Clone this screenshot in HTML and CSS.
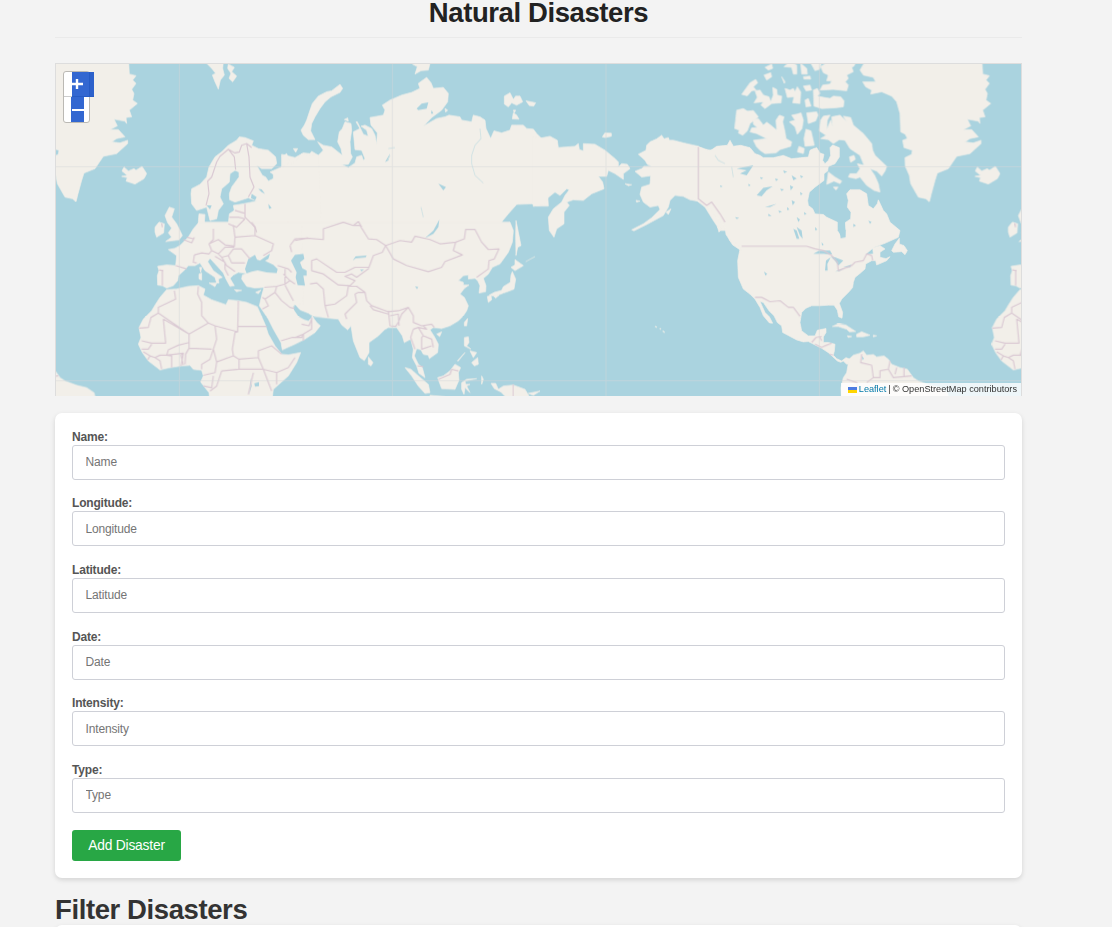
FILE: index.html
```html
<!DOCTYPE html>
<html lang="en">
<head>
<meta charset="utf-8">
<title>Natural Disasters</title>
<link rel="stylesheet" href="styles.css">
</head>
<body>
<main class="container">
<h1 class="page-title">Natural Disasters</h1>
<section class="map">
<svg class="map-tiles" viewBox="3 12 2895 993" preserveAspectRatio="none" aria-hidden="true">
<defs>
<filter id="soft" x="0" y="0" width="100%" height="100%"><feGaussianBlur stdDeviation="1.7"/></filter>
<g id="world">
<!-- Greenland, Iceland and the Canadian Arctic -->
<g class="land" transform="translate(1935 0)">
<path d="M495 5L480 30 490 45 520 52 527 65 488 65 497 80 515 90 512 102 545 95 575 108 590 125 600 160 602 215 616 222 622 235 608 240 612 262 637 270 635 282 615 292 616 318 628 345 632 370 655 410 678 415 688 424 694 400 705 360 712 338 745 325 770 288 810 280 843 250 843 240 820 248 795 245 810 235 835 230 815 208 790 208 812 197 802 177 835 183 840 190 838 172 855 170 848 150 872 130 858 120 862 100 855 88 868 70 858 60 868 47 848 42 846 5Z"/>
<path d="M825 348L842 345 826 332 832 320 845 332 862 325 868 330 886 318 900 340 892 355 865 371 838 362 842 352Z"/>
<path d="M110 150L130 145 142 153 160 151 175 170 150 190 142 212 128 225 115 218 118 210 104 205Z"/>
<path d="M160 180L175 175 190 195 200 186 212 195 230 210 228 180 238 165 252 170 248 185 255 215 258 235 275 245 272 258 240 268 228 278 195 280 180 270 170 260 160 240 200 235 170 220 150 215 155 203 172 202 160 192Z"/>
<path d="M275 165L290 162 303 158 310 180 306 205 292 222 285 200 268 185 285 180Z"/>
<path d="M320 158L350 155 354 165 347 182 325 190ZM318 207L333 212 343 255 315 258 312 235Z"/>
<path d="M362 180L370 168 390 165 382 180 380 210 392 180 398 200 395 170 420 165 440 185 430 168 452 172 460 195 490 220 515 250 518 270 525 285 560 318 555 332 545 347 530 332 510 325 524 345 535 370 540 395 522 390 500 375 480 350 468 355 445 350 450 340 470 340 480 325 472 310 492 315 480 285 450 265 435 240 418 238 400 250 385 238 362 235 378 225 358 212Z"/>
<path d="M385 335L405 350 425 362 420 370 402 362 380 372ZM400 380L414 380 408 389ZM448 290L462 285 466 297 452 306Z"/>
<path d="M340 90L352 85 360 100 352 108 372 112 390 115 400 108 422 110 432 122 430 140 405 143 365 145 342 138Z"/>
<path d="M385 5L468 5 462 18 455 22 460 35 440 45 445 55 436 65 445 75 440 92 400 88 360 90 368 75 390 72 395 62 380 62 385 45 370 38 362 20Z"/>
<path d="M125 103L150 68 167 58 173 68 160 80 168 90 155 92 142 107ZM165 92L180 90 190 105 207 110 212 125 220 105 218 82 230 88 232 105 245 108 243 128 215 130 195 145 183 135 190 125 162 128 172 112Z"/>
<path d="M195 22L215 12 218 25 205 30ZM192 45L212 38 215 50 200 60ZM252 20L270 5 290 15 290 42 280 42 275 22ZM302 10L320 25 322 42 305 42ZM330 5L365 5 358 28 345 32ZM255 85L270 90 280 85 285 95 292 80 302 95 300 130 278 128 282 110 262 112ZM245 50L255 65 253 70ZM310 78L330 75 335 90 318 92ZM315 120L325 115 333 138 318 140ZM310 50L330 48 332 57 312 57ZM297 258L313 265 310 280 292 275Z"/>
</g>
<!-- North America -->
<g class="land" transform="translate(1455 0)">
<path d="M520 270L490 268 475 258 430 248 400 240 388 240 385 232 372 236 365 225 350 236 330 245 320 255 318 270 295 282 315 300 322 312 336 318 312 318 305 325 285 333 305 350 332 346 330 372 305 380 300 402 310 425 330 440 355 435 360 447 335 472 310 490 275 508 282 511 320 492 370 465 385 440 390 420 405 405 430 408 450 418 472 422 495 440 520 480 540 510 620 510 620 290Z"/>
<path d="M378 455L393 445 385 462ZM288 420L300 422 290 425ZM255 370L275 373 265 376ZM187 230L195 218 214 219 214 228 195 232Z"/>
</g>
<g class="land" transform="translate(1935 0)">
<path d="M-20 258L5 262 30 272 50 258 82 255 90 240 100 258 122 255 150 262 165 280 180 285 190 292 220 292 250 285 275 295 302 292 325 290 330 270 340 265 350 262 360 278 372 282 368 300 375 310 385 300 392 285 390 262 398 254 418 262 418 290 405 310 385 318 383 332 372 340 372 360 345 380 328 395 323 420 325 435 338 445 345 460 370 462 380 470 412 485 412 510 425 530 437 525 438 510 430 490 452 475 453 455 442 440 445 420 440 400 450 388 480 388 500 400 505 435 520 445 532 430 535 418 550 450 560 460 570 485 600 510 595 530 555 548 522 560 508 572 495 582 520 580 518 562 540 555 555 565 540 575 540 590 558 594 570 588 560 600 530 613 527 600 515 600 497 610 495 625 480 638 465 650 460 665 458 680 448 692 425 715 418 728 428 755 426 772 416 768 412 748 402 733 385 733 360 735 335 735 318 742 305 755 300 785 305 810 325 825 345 825 352 808 378 803 378 815 370 828 370 845 385 845 405 850 403 870 400 883 410 893 425 900 438 890 450 895 447 908 440 910 430 900 422 904 412 900 385 875 365 862 345 852 325 842 310 843 290 837 248 815 245 795 232 785 222 765 207 750 190 725 180 722 195 755 208 768 218 787 208 786 190 765 180 740 165 715 150 700 130 685 115 650 113 600 118 575 120 565 90 540 78 522 75 500 50 470 20 435 -20 415Z"/>
<path d="M575 570L585 550 598 533 598 550 612 555 622 570 615 582 605 573 580 575ZM87 536L105 545 120 560 124 570 98 553ZM52 498L63 505 57 515Z"/>
</g>
<g class="land" transform="translate(1935 495)">
<path d="M397 302L415 294 438 298 467 317 448 318 440 310 415 302ZM470 325L485 318 510 328 490 333 470 333ZM442 330L455 332 445 335ZM520 328L530 330 520 333Z"/>
<path d="M425 530L423 485 430 455 440 440 447 400 460 388 480 382 490 375 500 388 520 386 530 393 552 390 565 400 575 415 600 425 622 430 640 455 655 465 690 478 720 485 742 500 750 530Z"/>
</g>
<!-- Hawaii -->
<path class="land-line" d="M1800 797L1806 799M1814 803L1818 805M1823 810L1829 815"/>
<!-- Arctic islands off Eurasia -->
<g class="land">
<path d="M450 5L470 25 482 40 472 45 480 65 490 87 496 60 508 45 503 25 505 5ZM520 12L538 22 530 35 545 48 533 65 522 55 528 40 518 25ZM715 265L728 265 722 276Z"/>
</g>
<g class="land" transform="translate(720 0)">
<path d="M135 73L143 85 135 97 108 110 90 125 75 145 60 170 50 190 47 212 60 238 40 238 25 225 18 210 28 195 35 180 45 150 52 130 70 108 95 95 110 92Z"/>
<path d="M370 5L405 10 400 30 378 32 360 42 367 20 352 12ZM628 108L645 98 655 118 662 108 675 108 683 125 665 135 650 128 640 140 628 132ZM693 122L722 128 716 138 703 136ZM655 158L665 165 672 177 652 176ZM450 145L458 150 452 156ZM148 178L158 173 160 183ZM655 150L662 150 658 158Z"/>
<path d="M-40 282L0 292 25 278 45 280 50 273 70 285 85 270 68 245 85 255 110 260 142 285 138 265 128 245 133 215 142 205 150 185 168 190 170 210 165 245 167 280 172 290 160 312 140 313 160 322 180 308 185 290 200 285 205 300 210 295 200 270 180 268 175 215 195 205 183 185 187 185 205 222 220 228 215 210 198 198 210 195 230 205 240 225 245 252 247 218 228 195 225 172 265 165 270 150 262 135 285 120 320 105 350 97 375 85 370 70 395 52 408 68 415 85 445 82 460 100 458 125 440 150 410 172 385 198 425 175 450 170 462 165 495 170 500 180 530 185 535 165 555 170 570 180 573 205 587 235 597 212 620 218 645 210 650 195 665 195 685 195 695 205 715 207 725 220 740 235 750 235 760 437 725 437 710 430 665 432 640 460 615 490 640 498 650 507 640 530 -40 530Z"/>
</g>
<g class="land" transform="translate(1455 0)">
<path d="M-20 230L5 233 30 228 52 240 55 262 105 258 115 250 118 268 130 272 130 250 165 252 195 270 225 295 235 305 235 320 245 310 262 312 270 325 250 340 250 357 225 340 205 330 200 348 175 348 188 365 192 385 155 400 130 420 100 418 80 425 88 435 72 455 72 490 50 505 42 530 28 510 25 470 40 445 65 425 75 405 88 388 80 385 60 405 45 395 20 415 15 432 -20 438Z"/>
</g>
<g class="land">
<path d="M408 400L410 385 435 372 455 350 462 320 480 290 500 275 520 255 545 240 553 230 570 232 595 242 590 255 610 265 640 270 662 290 665 310 650 325 620 325 605 315 622 345 632 350 640 362 655 355 655 342 645 335 675 322 688 318 692 300 680 290 695 280 702 300 695 315 720 305 740 280 790 285 800 520 430 520 430 485 432 460 450 462 448 488 490 495 520 490 523 460 538 450 535 435 565 430 605 422 580 412 540 425 524 418 523 400 530 380 552 350 552 335 540 330 525 340 523 365 500 385 495 410 505 430 490 450 485 475 465 480 455 440 425 450 410 430Z"/>
</g>
<!-- South and east Asia -->
<g class="land" transform="translate(720 495)">
<path d="M-22 -10L645 -10 655 15 652 50 640 80 615 115 592 125 580 145 565 158 573 180 572 198 552 202 555 180 548 165 540 158 520 160 520 148 505 150 490 165 505 170 505 178 522 178 508 188 495 205 508 215 520 240 515 255 505 270 490 285 465 300 440 308 415 305 405 312 418 332 430 355 428 380 403 398 400 388 385 385 378 372 365 368 358 390 370 415 382 425 390 455 372 442 365 420 352 395 355 370 347 340 328 350 322 330 305 305 280 305 268 312 250 330 222 350 222 380 208 404 195 395 175 345 168 300 158 312 140 297 130 280 100 277 55 272 40 262 15 252 0 235 -22 240Z"/>
<path d="M663 -15L670 20 678 60 668 65 663 90 662 30ZM660 102L685 120 660 135 648 125 660 118ZM652 138L662 160 657 190 640 197 625 202 600 212 583 208 598 200 620 194 625 183 646 170 648 148ZM577 212L588 210 590 222 580 230ZM597 212L612 208 602 217ZM508 290L518 278 515 300 508 300ZM425 325L440 318 434 332ZM220 393L234 410 228 420 220 415ZM508 335L520 333 522 350 515 360 528 370 508 360ZM530 410L548 395 550 415 538 420ZM525 375L545 380 535 395ZM487 405L510 380 490 405Z"/>
<path d="M428 455L445 450 465 435 480 415 497 425 490 440 492 462 480 490 440 488ZM330 425L348 430 370 450 400 475 405 500 390 502 370 480 350 450ZM405 508L450 512 480 520 405 520ZM500 470L515 460 545 458 510 465 512 475 525 475 515 480 525 500 510 485 507 505 500 490ZM560 450L565 460 560 475ZM588 472L602 472 610 490 625 480 655 477 690 490 702 510 715 525 640 520 618 498 598 488ZM700 502L735 495 715 508Z"/>
</g>
<!-- Europe, the Near East and Africa -->
<g class="land" transform="translate(0 495)">
<path d="M432 -10L740 -10 745 235 717 237 717 250 732 270 750 282 765 280 772 272 785 290 796 300 780 320 750 340 720 355 682 372 678 350 655 310 640 280 620 250 613 240 620 210 627 185 600 187 575 182 560 160 562 148 575 143 550 140 535 148 525 158 538 180 525 182 513 160 505 142 490 125 465 98 458 108 475 135 502 155 490 160 492 172 485 172 480 155 450 135 435 112 420 120 400 120 390 132 370 150 368 165 355 180 335 187 322 180 308 178 307 150 312 135 308 122 335 118 362 120 365 90 340 72 360 68 375 60 400 35 415 10Z"/>
<path d="M607 243L575 230 550 225 520 222 513 237 470 222 445 208 450 190 430 180 400 182 365 190 335 192 315 215 302 235 290 255 265 280 252 305 258 335 250 355 262 380 280 405 315 432 345 425 380 420 405 418 415 430 440 433 445 450 437 468 462 500 465 530 650 530 655 490 700 450 725 410 737 380 700 387 680 385 660 360 640 325 630 295Z"/>
<path d="M330 -30L343 -55 358 -50 350 -25 365 -5 375 15 382 30 372 43 332 48 350 35 340 22 350 8 338 -8ZM300 5L312 -10 328 -5 326 22 305 35 300 20ZM462 172L485 172 480 183ZM432 145L440 142 440 163 432 160ZM434 125L440 125 437 140ZM538 192L560 194 545 198ZM602 200L618 193 610 204Z"/>
</g>
<!-- Inland seas and lakes -->
<g class="water" transform="translate(0 495)">
<path d="M570 130L580 100 600 88 606 102 615 105 645 84 640 100 630 106 655 118 668 130 665 142 635 140 608 134 590 138 575 143Z"/>
<path d="M708 105L720 88 745 85 748 100 735 110 742 128 755 135 755 150 745 150 750 180 728 178 722 155 725 140ZM598 472L612 468 612 480 600 482ZM715 240L735 258 750 265 770 275 760 285 745 280 730 272 717 252Z"/>
<path d="M590 -95L605 -85 600 -75 588 -82ZM610 -110L620 -108 630 -95 620 -100ZM640 -65L650 -52 642 -50ZM455 -60L470 -60 465 -48ZM585 455L590 480 582 505 587 480Z"/>
</g>
<g class="water" transform="translate(720 495)">
<path d="M433 -18L430 5 415 25 390 38 415 15ZM173 105L182 92 215 90 212 95 182 98ZM195 132L207 132 200 137ZM360 182L370 184 366 190Z"/>
<path d="M365 -350L380 -365 400 -368 395 -350 370 -345ZM430 -125L453 -115 445 -105ZM270 -190L285 -215 280 -195ZM410 -345L415 -335 408 -335Z"/>
</g>
<g class="water" transform="translate(1935 495)">
<path d="M340 85L358 75 390 75 397 87 370 85ZM375 135L378 105 392 95 382 115 383 135ZM392 93L405 95 430 105 415 120 405 105ZM405 138L435 127 418 136ZM430 125L455 117 450 125ZM415 -10L435 -15 437 35 422 38ZM280 10L290 15 298 40 290 40ZM290 5L305 15 308 40 300 30ZM192 138L202 145 196 150ZM485 390L492 398 488 403Z"/>
<path d="M110 -170L160 -180 140 -150 120 -155 140 -165ZM170 -90L190 -113 218 -117 200 -105 185 -87ZM195 -55L230 -65 210 -55ZM205 -35L215 -28 205 -28ZM275 -150L290 -140 280 -135ZM270 -120L280 -115 272 -105ZM275 -75L285 -70 278 -60ZM300 -100L308 -95 302 -90ZM240 -110L252 -108 245 -103ZM290 -25L300 -18 295 -10ZM460 -5L468 0 460 5ZM505 -15L515 -10 510 -5Z"/>
<path d="M145 -125L152 -120 146 -117ZM105 -25L118 -22 110 -19ZM225 -140L235 -138 228 -133ZM250 -165L262 -160 252 -157ZM300 -150L310 -146 303 -142ZM235 -45L246 -42 238 -38ZM262 -55L268 -48 261 -46ZM312 -40L320 -34 313 -32ZM180 -145L190 -142 183 -138ZM60 -120L68 -117 62 -114ZM345 5L352 12 346 15ZM365 50L371 58 366 60Z"/>
</g>
<path class="river" d="M1275 205L1278 235 1260 255 1250 285 1250 310 1260 345 1285 368M1005 285L998 300M1098 440L1105 470M1000 265L1020 262M1980 285L1990 300 2010 310M2030 320L2035 350"/>
<path class="river" d="M1412 603L1440 588"/>
<!-- National borders -->
<g class="border">
<path d="M453 435L462 400 458 362 470 350 485 305 495 288 520 267 540 278 553 275 560 255 575 250 590 262M520 267L538 290 542 328M575 250L582 290 585 350 597 380 580 410M570 430L570 470 600 500 605 515M523 470L550 470 570 475M540 450L568 458M520 490L545 500 570 475M320 488L322 500"/>
<g transform="translate(0 495)"><path d="M385 42L410 52 418 35M395 35L415 40M362 120L395 130M322 135L322 180M312 133L325 135M418 88L440 82 462 85 470 75 462 55 475 42 475 10M418 88L415 110 425 112M462 55L490 42 510 58 538 62 540 35 535 0M470 75L490 85 510 65 538 65M490 85L500 95 520 90 535 70 560 70 585 100M520 90L530 112 570 112M480 92L510 110 510 130 520 150M500 95L515 120 540 138M540 35L600 30 600 5 590 -10M600 30L655 55 650 75 625 90M705 60L720 40 760 38M705 60L710 80M668 120L700 130 710 140M685 145L705 165M690 130L690 175 665 182 628 185M690 175L705 165 720 175M665 182L660 200 630 220 622 215M660 200L680 225 705 245 718 248M630 220L640 240 622 250M690 178L715 225M678 345L710 335 740 335 745 325"/>
<path d="M358 195L362 220 310 245 310 262 402 325 460 292 440 270 440 230 428 205 430 182M310 262L288 275 280 305 252 307M325 280L332 352 290 352 260 345M325 280L402 325 402 350 370 358 340 372 335 388M460 292L480 300 548 318 550 225M550 302L635 302M548 318L540 320 532 370 535 390 485 408 475 370 485 340 480 300M402 350L402 367 470 370M260 370L280 370 290 355M265 378L285 390 300 395 315 405 320 430M285 390L278 402M300 395L315 388 335 388 350 390 350 425M335 388L385 382 378 420M390 415L392 385 402 367M475 370L465 400 440 415 440 430M535 390L552 400 610 395 610 375 650 360 680 385M610 395L625 430 552 430 552 400M625 430L665 440 700 425 720 395M665 440L665 475M485 408L480 440 445 448M500 435L552 430M500 435L485 480 465 495M625 430L650 495M580 505L595 440M385 382L378 388 385 418M475 450L470 485 445 480"/></g>
<g transform="translate(720 495)"><path d="M0 45L35 38 85 42 85 10 145 -10 175 0 195 0 220 40 245 42 272 60 295 100 335 120 400 138 440 125 450 108 502 88 475 75 482 50 435 55 405 42 360 32 350 50 315 45 272 60 262 80 235 90 222 125 180 125 150 140 125 140 65 100 50 105 50 135 85 145 130 178 165 180 180 165 150 152 170 145 185 155 222 128M482 50L508 40 512 12 540 12 560 50 580 72 612 70 598 100 582 105 580 130 545 155M175 0L190 -12 200 5M45 175L65 172 85 190 90 240 100 275M90 240L120 235 155 210 160 182 185 182 210 200 215 225 230 240 280 258 310 255 340 245 355 270 355 290 380 300 410 295 418 305M225 240L235 252 280 265M210 200L190 200 180 205 185 230 150 265 155 280M280 255L285 300 302 302 310 290M285 270L310 265 312 300M340 245L320 265 310 290M355 310L370 305 385 330 410 340 415 365M355 310L347 335 360 370M370 305L395 310 385 300M385 330L380 335 380 370 410 360M430 460L465 445 470 430 490 435M655 475V520M25 345L25 325 0 335M25 325L50 310 50 275M50 280L42 300 20 295M368 420L385 422"/></g>
<g transform="translate(1935 495)"><path d="M-5 -235V-80L20 -60 35 -70 60 -35 75 -10M125 62H320L345 70 370 75 395 90 412 110 415 135 455 120 465 110 490 105 500 85 515 90 518 105M165 215L185 215 210 228 240 225 265 245 280 245 300 272M335 350L348 335 365 332M345 355L365 365 375 360 395 352M358 332L365 345M388 385L400 388M485 385L482 410 515 418 520 455 540 455 540 435 565 430 570 405M565 430L580 455 635 450M590 425L585 445M612 425L612 450M440 460L470 470 475 490M520 455L500 470"/></g>
</g>
</g>
</defs>
<rect class="sea" x="0" y="9" width="2901" height="999"/>
<g filter="url(#soft)">
<use href="#world"/><use href="#world" x="2560"/><use href="#world" x="-2560"/>
<path class="grid" d="M373 0V1008M1012 0V1008M1653 0V1008M2293 0V1008M0 319H2901M0 959H2901"/>
</g>
</svg>
<div class="zoom-control">
<button class="zoom-btn zoom-in" aria-label="Zoom in"><svg viewBox="0 0 12 12"><path d="M6 1V11M1 6H12"/></svg></button>
<button class="zoom-btn zoom-out" aria-label="Zoom out"><svg viewBox="0 0 12 12"><path d="M0 6H12"/></svg></button>
</div>
<div class="attribution"><span class="flag"></span><a class="leaflet-link">Leaflet</a><span class="sep">|</span><span class="osm">© OpenStreetMap contributors</span></div>
</section>
<form class="card">
<div class="field"><label class="label" for="name">Name:</label><input class="input" id="name" placeholder="Name"></div>
<div class="field"><label class="label" for="lon">Longitude:</label><input class="input" id="lon" placeholder="Longitude"></div>
<div class="field"><label class="label" for="lat">Latitude:</label><input class="input" id="lat" placeholder="Latitude"></div>
<div class="field"><label class="label" for="date">Date:</label><input class="input" id="date" placeholder="Date"></div>
<div class="field"><label class="label" for="intensity">Intensity:</label><input class="input" id="intensity" placeholder="Intensity"></div>
<div class="field"><label class="label" for="type">Type:</label><input class="input" id="type" placeholder="Type"></div>
<button class="submit" type="button">Add Disaster</button>
</form>
<h2 class="section-title">Filter Disasters</h2>
<div class="filter-card"></div>
</main>
</body>
</html>
```
FILE: styles.css
```css
* { box-sizing: border-box; }
html { overflow: hidden; }
body {
  margin: 0;
  height: 927px;
  overflow: hidden;
  background: #f3f3f3;
  font-family: "Liberation Sans", Arial, sans-serif;
}
.container { width: 967px; margin-left: 55px; }
.page-title {
  margin: 0 0 25px;
  height: 38px;
  border-bottom: 1px solid #eaeaea;
  color: #222;
  font-size: 27.5px;
  letter-spacing: -.4px;
  line-height: 25px;
  text-align: center;
}
.map {
  position: relative;
  height: 333px;
  border: 1px solid #ddd;
  border-bottom: 0;
  overflow: hidden;
}
.map-tiles { display: block; width: 100%; height: 100%; }
.sea, .water { fill: #aad3df; }
.land { fill: #f2efe9; }
.land path { stroke: #f2efe9; stroke-width: 2; stroke-linejoin: round; }
.land-line { fill: none; stroke: #e6ebe7; stroke-width: 4; }
.border { fill: none; stroke: #dac9d3; stroke-width: 3.5; stroke-linejoin: round; }
.river { fill: none; stroke: #d3e3e4; stroke-width: 3; }
.grid { fill: none; stroke: #d5d8da; stroke-width: 3; opacity: .5; }
.zoom-control {
  position: absolute;
  left: 7px;
  top: 7px;
  width: 27px;
  height: 52px;
  border: 1px solid #bbb9b4;
  border-radius: 3px;
  background: linear-gradient(#fff 24px, #ccc 24px, #ccc 25px, #fff 25px);
}
.zoom-btn {
  display: flex;
  align-items: center;
  height: 25px;
  padding: 0;
  border: 0;
  background: #3367d1;
}
.zoom-btn svg { width: 12px; height: 12px; fill: none; stroke: #fff; stroke-width: 2; }
.zoom-in {
  width: 22px;
  margin-left: 8px;
  border-bottom: 1px solid #265bc5;
  background: linear-gradient(90deg, #3367d1 17px, #265bc5 17px, #265bc5 18px, #2d61cb 18px);
}
.zoom-in svg { margin-left: -1px; stroke-width: 2.4; }
.zoom-out { width: 13px; margin-left: 7px; justify-content: center; }
.attribution {
  position: absolute;
  right: 0;
  bottom: 0;
  display: flex;
  align-items: center;
  justify-content: flex-end;
  width: 180px;
  height: 13px;
  padding-right: 4px;
  background: rgba(255, 255, 255, .8);
  color: #333;
  font-size: 9.17px;
  line-height: 13px;
  white-space: nowrap;
}
.flag { width: 9px; height: 6px; margin-right: 2px; background: linear-gradient(#4c7be1 50%, #ffd500 50%); }
.leaflet-link { color: #0078a8; }
.sep { margin: 0 2px; }
.card {
  height: 465px;
  margin-top: 17px;
  padding: 16.67px 17px;
  border-radius: 7px;
  background: #fff;
  box-shadow: 0 2px 5px rgba(0, 0, 0, .13);
}
.field { height: 66.67px; }
.label {
  display: block;
  height: 15px;
  color: #555;
  font-size: 12px;
  font-weight: bold;
  letter-spacing: -.18px;
  line-height: 15px;
}
.input {
  display: block;
  width: 100%;
  height: 35px;
  padding: 0 12.5px;
  border: 1px solid #ced0d7;
  border-radius: 3px;
  background: #fff;
  font: 12px "Liberation Sans", Arial, sans-serif;
  letter-spacing: -.15px;
}
.input::placeholder { color: #757575; opacity: 1; }
.submit {
  display: block;
  width: 109px;
  height: 31px;
  padding: 0;
  border: 0;
  border-radius: 3px;
  background: #28a745;
  color: #fff;
  font: 13.8px "Liberation Sans", Arial, sans-serif;
  letter-spacing: -.2px;
}
.section-title {
  margin: 16px 0 0;
  color: #333;
  font-size: 27.5px;
  letter-spacing: -.4px;
  line-height: 31px;
}
.filter-card { height: 20px; border-radius: 7px; background: #fff; box-shadow: 0 2px 5px rgba(0, 0, 0, .13); }
```
